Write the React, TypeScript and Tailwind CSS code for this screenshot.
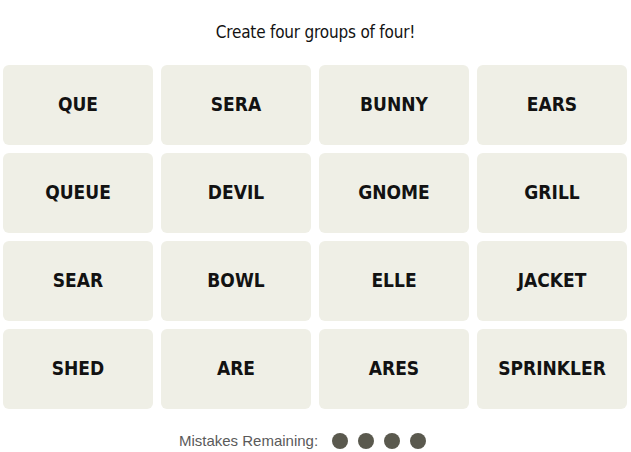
import React from "react"

const words: string[] = [
  "QUE", "SERA", "BUNNY", "EARS",
  "QUEUE", "DEVIL", "GNOME", "GRILL",
  "SEAR", "BOWL", "ELLE", "JACKET",
  "SHED", "ARE", "ARES", "SPRINKLER",
]

export default function App() {
  return (
    <div className="w-[631px] h-[452px] bg-white flex flex-col items-center">
      <p className="mt-[21px] h-[22px] text-[17px] leading-[22px] text-[#121212] font-['DejaVu_Sans_Condensed','Liberation_Sans',sans-serif] tracking-[-0.2px]">
        Create four groups of four!
      </p>
      <div className="mt-[22px] grid grid-cols-4 gap-2 w-[624px] ml-[-1px]">
        {words.map((w) => (
          <div
            key={w}
            className="h-[80px] pb-[2px] rounded-md bg-[#efefe6] flex items-center justify-center text-[19px] font-bold text-[#121212] font-['DejaVu_Sans_Condensed','Liberation_Sans',sans-serif]"
          >
            {w}
          </div>
        ))}
      </div>
      <div className="mt-[21px] flex items-center gap-[14px] ml-[-26px]">
        <span className="text-[15px] text-[#5a5a5a] font-['Liberation_Sans',sans-serif]">Mistakes Remaining:</span>
        <div className="flex gap-[10px]">
          {[0, 1, 2, 3].map((i) => (
            <span key={i} className="w-4 h-4 rounded-full bg-[#5a594e]" />
          ))}
        </div>
      </div>
    </div>
  )
}
